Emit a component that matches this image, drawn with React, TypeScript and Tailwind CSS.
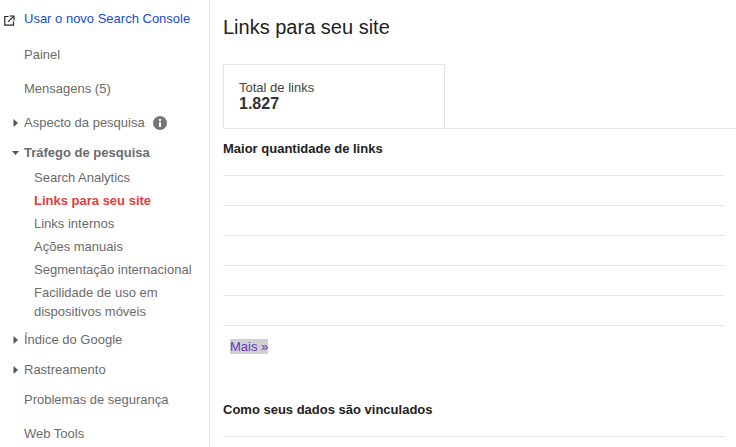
import React from "react";

const subItems = [
  { label: "Search Analytics" },
  { label: "Links para seu site", active: true },
  { label: "Links internos" },
  { label: "Ações manuais" },
  { label: "Segmentação internacional" },
];

function Caret({ open = false }: { open?: boolean }) {
  return (
    <svg width="7" height="8" viewBox="0 0 7 8" className="shrink-0" fill="#555">
      {open ? <path d="M0 2h7L3.5 6z" /> : <path d="M1.5 0 6 4 1.5 8z" />}
    </svg>
  );
}

function Row({ children, className = "" }: { children: React.ReactNode; className?: string }) {
  return <div className={`flex items-center h-[20px] pl-[24px] text-[#6b6b6b] ${className}`}>{children}</div>;
}

function Section({ label, className = "", children }: { label: string; className?: string; children?: React.ReactNode }) {
  return (
    <div className={`flex items-center h-[20px] pl-[12px] gap-[5px] text-[#6b6b6b] ${className}`}>
      <Caret />
      <span>{label}</span>
      {children}
    </div>
  );
}

export default function App() {
  return (
    <div className="flex w-[736px] h-[447px] overflow-hidden bg-white font-['Liberation_Sans',Arial,sans-serif] text-[13px]">
      <aside className="w-[210px] shrink-0 border-r border-[#e5e5e5] pt-[9px]">
        <div className="flex items-center h-[20px] pl-[4px] gap-[5px]">
          <svg width="11" height="11" viewBox="0 0 11 11" fill="none" stroke="#222" strokeWidth="1.2" className="shrink-0 mt-[2px]">
            <path d="M4.5 1.5H.8v8.7h8.7V6.5" />
            <path d="M5.5 1h4.5v4.5" />
            <path d="M9.8 1.2 4.2 6.8" />
          </svg>
          <span className="text-[#1a4acb] ml-[4px]">Usar o novo Search Console</span>
        </div>
        <Row className="mt-[16px]">Painel</Row>
        <Row className="mt-[14px]">Mensagens (5)</Row>
        <Section label="Aspecto da pesquisa" className="mt-[14px]">
          <svg width="14" height="14" viewBox="0 0 14 14" className="shrink-0 ml-[3px]">
            <circle cx="7" cy="7" r="7" fill="#777" />
            <rect x="6" y="6" width="2" height="5" fill="#fff" />
            <rect x="6" y="3" width="2" height="2" fill="#fff" />
          </svg>
        </Section>
        <div className="flex items-center h-[20px] pl-[12px] gap-[5px] mt-[10px] text-[#6b6b6b] font-bold">
          <Caret open />
          <span>Tráfego de pesquisa</span>
        </div>
        <div className="mt-[3px] pl-[34px] text-[#6b6b6b]">
          {subItems.map((item) => (
            <div
              key={item.label}
              className={`h-[23px] leading-[23px] whitespace-nowrap ${item.active ? "font-bold text-[#dd4040]" : ""}`}
            >
              {item.label}
            </div>
          ))}
          <div className="leading-[19px] pt-[2px]">
            Facilidade de uso em
            <br />
            dispositivos móveis
          </div>
        </div>
        <Section label="Índice do Google" className="mt-[9px]" />
        <Section label="Rastreamento" className="mt-[10px]" />
        <Row className="mt-[10px]">Problemas de segurança</Row>
        <Row className="mt-[14px]">Web Tools</Row>
      </aside>
      <main className="flex-1 min-w-0 text-[#222]">
        <h1 className="ml-[13px] mt-[15px] text-[20px] leading-[24px] font-normal text-[#222]">Links para seu site</h1>
        <div className="ml-[13px] mt-[25px] border-b border-[#e5e5e5]">
          <div className="w-[222px] h-[64px] border border-b-0 border-[#e5e5e5] pl-[15px] pt-[15px]">
            <div className="leading-[16px] text-[#444]">Total de links</div>
            <div className="text-[16px] leading-[16px] font-bold text-[#333]">1.827</div>
          </div>
        </div>
        <div className="ml-[13px] w-[501px]">
          <h2 className="mt-[12px] h-[34px] leading-[16px] font-bold text-[13px] text-[#222]">Maior quantidade de links</h2>
          {[0, 1, 2, 3, 4].map((i) => (
            <div key={i} className="h-[30px] border-t border-[#e5e5e5]" />
          ))}
          <div className="border-t border-[#e5e5e5] pt-[13px] pl-[7px]">
            <span className="block w-[38px] h-[15px] bg-[#d0d0d0] text-[#6633cc] leading-[15px] whitespace-nowrap">Mais »</span>
          </div>
          <h2 className="mt-[48px] h-[20px] leading-[16px] font-bold text-[13px] text-[#222]">Como seus dados são vinculados</h2>
          <div className="mt-[14px] border-t border-[#e5e5e5]" />
        </div>
      </main>
    </div>
  );
}
